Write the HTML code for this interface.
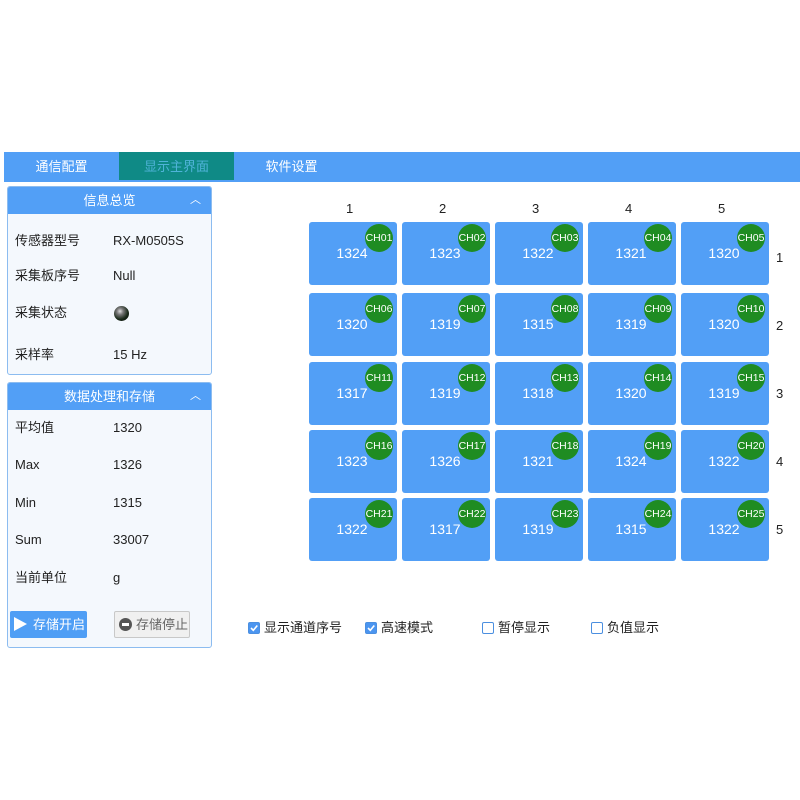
<!DOCTYPE html>
<html><head><meta charset="utf-8"><style>
body{margin:0;width:800px;height:800px;background:#fff;position:relative;overflow:hidden;font-family:"Liberation Sans","Noto Sans CJK SC",sans-serif;font-size:13px;color:#222}
.a{position:absolute;line-height:16px}
.tab{position:absolute;top:152px;height:30px;line-height:30px;text-align:center;color:#fff;font-size:13px}
.panel{position:absolute;left:7px;width:203px;background:#f4f8fd;border:1px solid #8cbcf0;border-radius:3px}
.ph{position:absolute;left:0;top:0;width:203px;height:27px;background:#529ff6;color:#fff;text-align:center;line-height:27px;font-size:13px;border-radius:2px 2px 0 0}
.ph .car{position:absolute;right:10px;top:0;font-size:11px}
.lb{position:absolute;left:7px;font-size:13px;line-height:18px;height:18px}
.vl{position:absolute;left:105px;font-size:13px;line-height:18px;height:18px}
.cell{position:absolute;width:88px;height:63px;background:#529ff6;border-radius:3px}
.cell .v{position:absolute;left:0;width:88px;text-align:center;top:23px;color:#fff;font-size:14px;line-height:16px;transform:translateX(-1px)}
.cell .c{position:absolute;right:4px;top:2px;width:28px;height:28px;border-radius:50%;background:#1f8c22;color:#fff;font-size:10.5px;text-align:center;line-height:28px}
.cb{position:absolute;top:622px;width:10px;height:10px;border:1px solid #4b8fe0;border-radius:2px;background:#fff}
.cb.on{background:#4b95f0}
.cbl{position:absolute;top:619px;font-size:13px;line-height:18px}
</style></head><body>
<div class="a" style="left:4px;top:152px;width:796px;height:30px;background:#529ff6"></div>
<div class="a" style="left:119px;top:152px;width:115px;height:28px;background:#0f8a86"></div>
<div class="tab" style="left:4px;width:115px">通信配置</div>
<div class="tab" style="left:119px;width:115px;color:#4fb3d8">显示主界面</div>
<div class="tab" style="left:234px;width:115px">软件设置</div>

<div class="panel" style="top:186px;height:187px">
<div class="ph">信息总览<span class="car">︿</span></div>
<div class="lb" style="top:45px">传感器型号</div><div class="vl" style="top:45px">RX-M0505S</div>
<div class="lb" style="top:80px">采集板序号</div><div class="vl" style="top:80px">Null</div>
<div class="lb" style="top:117px">采集状态</div>
<div class="a" style="left:106px;top:119px;width:15px;height:15px;border-radius:50%;background:radial-gradient(circle at 40% 35%,#ddd 0,#777 25%,#1a2a1a 60%,#000 100%)"></div>
<div class="lb" style="top:159px">采样率</div><div class="vl" style="top:159px">15 Hz</div>
</div>

<div class="panel" style="top:382px;height:264px">
<div class="ph">数据处理和存储<span class="car">︿</span></div>
<div class="lb" style="top:36px">平均值</div><div class="vl" style="top:36px">1320</div>
<div class="lb" style="top:73px">Max</div><div class="vl" style="top:73px">1326</div>
<div class="lb" style="top:111px">Min</div><div class="vl" style="top:111px">1315</div>
<div class="lb" style="top:148px">Sum</div><div class="vl" style="top:148px">33007</div>
<div class="lb" style="top:186px">当前单位</div><div class="vl" style="top:186px">g</div>
<div class="a" style="left:2px;top:228px;width:77px;height:27px;background:#4f9ef5;border-radius:2px;color:#fff;line-height:27px;font-size:13px"><span style="position:absolute;left:4px;top:6px;width:0;height:0;border-left:13px solid #fff;border-top:7px solid transparent;border-bottom:7px solid transparent"></span><span style="position:absolute;left:23px">存储开启</span></div>
<div class="a" style="left:106px;top:228px;width:74px;height:25px;background:#f0f0f0;border:1px solid #c8c8c8;border-radius:2px;color:#666;line-height:25px;font-size:13px"><span style="position:absolute;left:4px;top:6px;width:13px;height:13px;border-radius:50%;background:#555"><span style="position:absolute;left:3px;top:5px;width:7px;height:3px;background:#fff"></span></span><span style="position:absolute;left:21px">存储停止</span></div>
</div>

<div class="a" style="left:346px;top:201px">1</div><div class="a" style="left:439px;top:201px">2</div><div class="a" style="left:532px;top:201px">3</div><div class="a" style="left:625px;top:201px">4</div><div class="a" style="left:718px;top:201px">5</div>
<div class="a" style="left:776px;top:250px">1</div><div class="a" style="left:776px;top:318px">2</div><div class="a" style="left:776px;top:386px">3</div><div class="a" style="left:776px;top:454px">4</div><div class="a" style="left:776px;top:522px">5</div>

<div class="cell" style="left:309px;top:222px"><div class="v">1324</div><div class="c">CH01</div></div>
<div class="cell" style="left:402px;top:222px"><div class="v">1323</div><div class="c">CH02</div></div>
<div class="cell" style="left:495px;top:222px"><div class="v">1322</div><div class="c">CH03</div></div>
<div class="cell" style="left:588px;top:222px"><div class="v">1321</div><div class="c">CH04</div></div>
<div class="cell" style="left:681px;top:222px"><div class="v">1320</div><div class="c">CH05</div></div>
<div class="cell" style="left:309px;top:293px"><div class="v">1320</div><div class="c">CH06</div></div>
<div class="cell" style="left:402px;top:293px"><div class="v">1319</div><div class="c">CH07</div></div>
<div class="cell" style="left:495px;top:293px"><div class="v">1315</div><div class="c">CH08</div></div>
<div class="cell" style="left:588px;top:293px"><div class="v">1319</div><div class="c">CH09</div></div>
<div class="cell" style="left:681px;top:293px"><div class="v">1320</div><div class="c">CH10</div></div>
<div class="cell" style="left:309px;top:362px"><div class="v">1317</div><div class="c">CH11</div></div>
<div class="cell" style="left:402px;top:362px"><div class="v">1319</div><div class="c">CH12</div></div>
<div class="cell" style="left:495px;top:362px"><div class="v">1318</div><div class="c">CH13</div></div>
<div class="cell" style="left:588px;top:362px"><div class="v">1320</div><div class="c">CH14</div></div>
<div class="cell" style="left:681px;top:362px"><div class="v">1319</div><div class="c">CH15</div></div>
<div class="cell" style="left:309px;top:430px"><div class="v">1323</div><div class="c">CH16</div></div>
<div class="cell" style="left:402px;top:430px"><div class="v">1326</div><div class="c">CH17</div></div>
<div class="cell" style="left:495px;top:430px"><div class="v">1321</div><div class="c">CH18</div></div>
<div class="cell" style="left:588px;top:430px"><div class="v">1324</div><div class="c">CH19</div></div>
<div class="cell" style="left:681px;top:430px"><div class="v">1322</div><div class="c">CH20</div></div>
<div class="cell" style="left:309px;top:498px"><div class="v">1322</div><div class="c">CH21</div></div>
<div class="cell" style="left:402px;top:498px"><div class="v">1317</div><div class="c">CH22</div></div>
<div class="cell" style="left:495px;top:498px"><div class="v">1319</div><div class="c">CH23</div></div>
<div class="cell" style="left:588px;top:498px"><div class="v">1315</div><div class="c">CH24</div></div>
<div class="cell" style="left:681px;top:498px"><div class="v">1322</div><div class="c">CH25</div></div>

<div class="cb on" style="left:248px"><svg width="10" height="10" style="position:absolute;left:0;top:0"><path d="M2 5 L4.3 7.3 L8.3 2.5" stroke="#fff" stroke-width="1.6" fill="none"/></svg></div>
<div class="cbl" style="left:264px">显示通道序号</div>
<div class="cb on" style="left:365px"><svg width="10" height="10" style="position:absolute;left:0;top:0"><path d="M2 5 L4.3 7.3 L8.3 2.5" stroke="#fff" stroke-width="1.6" fill="none"/></svg></div>
<div class="cbl" style="left:381px">高速模式</div>
<div class="cb" style="left:482px"></div>
<div class="cbl" style="left:498px">暂停显示</div>
<div class="cb" style="left:591px"></div>
<div class="cbl" style="left:607px">负值显示</div>
</body></html>
